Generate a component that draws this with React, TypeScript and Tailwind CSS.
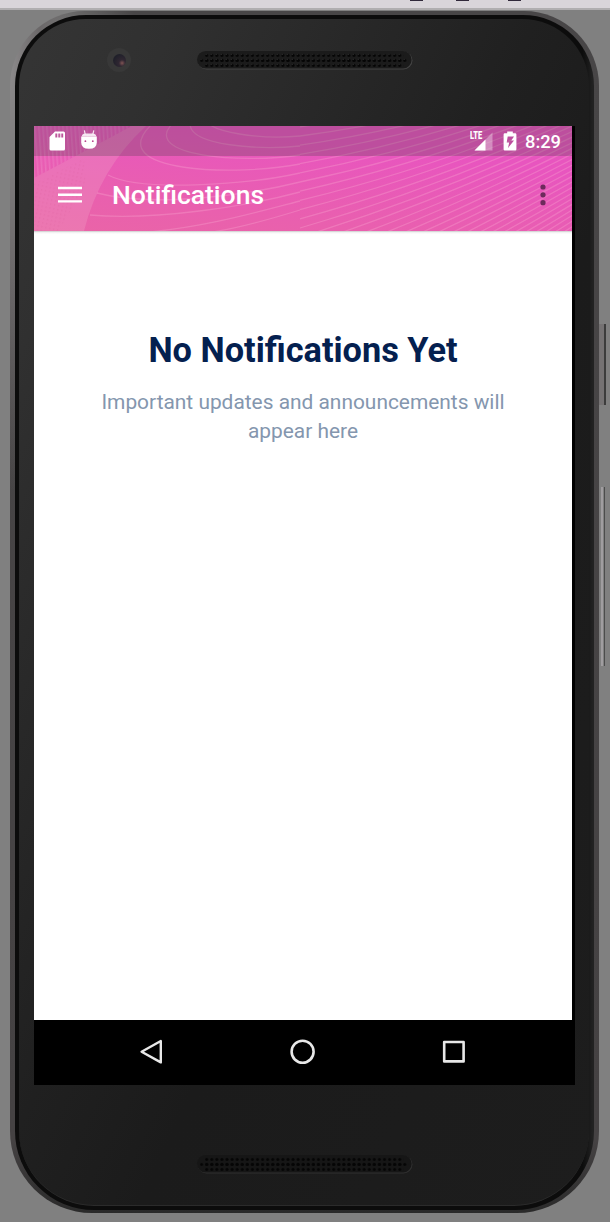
import React from "react";

const leftLoops = [
  "M172 -6 C176 6 226 14 266 10",
  "M156 -2 C156 20 226 24 266 20",
  "M138 -2 C108 30 206 38 266 29",
  "M118 -2 C66 48 206 50 266 38",
  "M74 49 C106 66 212 59 266 47",
  "M63 67 C120 82 214 69 266 56",
  "M56 89 C120 95 214 80 266 66",
  "M100 107 C160 104 220 87 266 75",
  "M170 107 C200 104 240 92 266 84",
];

const sweeps = Array.from({ length: 36 }, (_, i) => {
  const k = i - 3;
  const y0 = 10 + 9.2 * k;
  const s = 0.13 + 0.016 * Math.max(k, 0);
  const y1 = y0 - 66 - 3.6 * k;
  return `M266 ${y0.toFixed(1)} Q400 ${(y0 - s * 134).toFixed(1)} 538 ${y1.toFixed(1)}`;
});

function HeaderArt() {
  return (
    <svg className="absolute inset-0 h-full w-full" viewBox="0 0 538 105" preserveAspectRatio="none" aria-hidden="true">
      <defs>
        <linearGradient id="pink" x1="0" y1="120" x2="18" y2="-20" gradientUnits="userSpaceOnUse">
          <stop offset="0" stopColor="#ea66a4" />
          <stop offset="0.4" stopColor="#e960ae" />
          <stop offset="1" stopColor="#e855bf" />
        </linearGradient>
        <pattern id="bars" width="4" height="6" patternUnits="userSpaceOnUse" patternTransform="rotate(-4)">
          <rect width="1.5" height="6" fill="#fff" opacity="0.12" />
        </pattern>
        <pattern id="grain" width="4" height="4" patternUnits="userSpaceOnUse" patternTransform="rotate(12)">
          <rect width="1.4" height="1.8" fill="#d34f92" opacity="0.16" />
        </pattern>
      </defs>
      <rect width="538" height="105" fill="url(#pink)" />
      <path d="M0 0 H98 L0 52Z" fill="url(#bars)" />
      <path d="M98 0 H112 Q66 42 50 105 H0 V52Z" fill="#f0a8c8" opacity="0.28" />
      <path d="M0 58 L50 32 L52 60 L24 105 H0Z" fill="url(#grain)" />
      <g fill="none" stroke="#f8a8cf" strokeOpacity="0.34" strokeWidth="1.3">
        {leftLoops.map((d) => <path key={d} d={d} />)}
        {sweeps.map((d) => <path key={d} d={d} />)}
      </g>
    </svg>
  );
}

function Speaker({ id, dim }: { id: string; dim?: boolean }) {
  return (
    <svg className="block h-[20px] w-[218px]" viewBox="0 0 218 20" aria-hidden="true">
      <defs>
        <pattern id={id} x="3.1" y="2.9" width="5.08" height="5" patternUnits="userSpaceOnUse">
          <circle cx="2.5" cy="2.5" r="1.55" fill="#050505" />
          {!dim && <circle cx="1.9" cy="1.5" r="0.5" fill="#3a3a3a" />}
        </pattern>
      </defs>
      <rect x="1.5" y="1.5" width="215" height="18" rx="9" fill={dim ? "#303030" : "#444"} />
      <rect x="1" y="1" width="214.6" height="17.6" rx="8.8" fill={dim ? "#161616" : "#1b1b1b"} />
      <rect x="3.1" y="7.9" width="209" height="5" fill={`url(#${id})`} />
      <rect x="8.2" y="2.9" width="199" height="15" fill={`url(#${id})`} />
    </svg>
  );
}

function StatusBar() {
  return (
    <div className="relative flex h-[30px] items-center bg-[#3a3a3c]/25 pl-[15px] pr-[11px] text-white">
      <svg className="h-[20px] w-[16px]" viewBox="0 0 16 20" aria-hidden="true">
        <path fill="#fff" fillRule="evenodd" d="M6 .5H14.5Q16 .5 16 2V18Q16 19.5 14.5 19.5H2Q.5 19.5 .5 18V6ZM6.3 2.5V6.5H8.3V2.5ZM9.3 2.5V6.5H11.3V2.5ZM12.3 2.5V6.5H14.2V2.5Z" />
      </svg>
      <svg className="ml-[16px] h-[20px] w-[16px] overflow-visible" viewBox="0 0 16 20" aria-hidden="true">
        <path d="M3.4 -.6L4.2 3.5M12.8 -.6L11.8 3.5" stroke="#fff" strokeWidth="1.2" opacity="0.85" />
        <path d="M.7 5.6Q1 2.6 4.5 2.6H11.5Q15 2.6 15.3 5.6Z" fill="#fff" opacity="0.85" />
        <path fill="#fff" d="M.2 5.4H15.8V11.5Q15.8 17.8 8 17.8Q.2 17.8 .2 11.5Z" />
        <circle cx="4.4" cy="10.2" r="0.9" fill="#b8448d" />
        <circle cx="11.8" cy="10.2" r="0.9" fill="#b8448d" />
      </svg>
      <div className="ml-auto flex items-center">
        <div className="relative h-[20px] w-[24px]">
          <svg className="h-[20px] w-[24px]" viewBox="0 0 24 20" aria-hidden="true">
            <path d="M5.5 19.5L23.5 1.5V19.5Z" fill="#fff" opacity="0.35" />
            <path d="M5.5 19.5L16.5 8.5V19.5Z" fill="#fff" />
          </svg>
          <span className="absolute left-[1px] top-0 origin-left scale-x-[0.68] text-[11px] font-black leading-[10px]">LTE</span>
        </div>
        <svg className="ml-[10px] h-[20px] w-[14px]" viewBox="0 0 14 20" aria-hidden="true">
          <path fill="#fff" fillRule="evenodd" d="M4.2 .5H9.8V2.3H12.2Q13.4 2.3 13.4 3.5V18.3Q13.4 19.5 12.2 19.5H1.8Q.6 19.5 .6 18.3V3.5Q.6 2.3 1.8 2.3H4.2ZM4.7 5.5L3.7 11.5H6.2L5 17L11 9.5H8.3L11 5.5Z" />
        </svg>
        <span className="ml-[8px] pt-[2px] text-[18.3px] font-medium leading-[28px]">8:29</span>
      </div>
    </div>
  );
}

function AppBar() {
  return (
    <div className="relative flex h-[75px] items-center pl-[24px] pr-[26px] pt-[3px] text-white">
      <svg className="h-[18px] w-[24px]" viewBox="0 0 24 18" aria-label="Menu">
        <path d="M0 2H24M0 8.7H24M0 15.4H24" stroke="#fff" strokeWidth="2.4" />
      </svg>
      <h1 className="ml-[30px] text-[26.5px] font-medium leading-[36px]">Notifications</h1>
      <svg className="ml-auto h-[22px] w-[6px]" viewBox="0 0 6 22" aria-label="More">
        <g fill="#6d2a5c"><circle cx="3" cy="3" r="2.6" /><circle cx="3" cy="10.8" r="2.6" /><circle cx="3" cy="18.7" r="2.6" /></g>
      </svg>
    </div>
  );
}

function NavBar() {
  return (
    <div className="flex h-[65px] items-center justify-between bg-black pb-[2px] pl-[105px] pr-[109px]">
      <svg className="h-[26px] w-[24px]" viewBox="0 0 24 26" fill="none" stroke="#e8e8e8" strokeWidth="2.4" strokeLinejoin="round" aria-label="Back"><path d="M21.8 2V23.4L2.6 12.7Z" /></svg>
      <svg className="h-[26px] w-[26px]" viewBox="0 0 26 26" fill="none" stroke="#e8e8e8" strokeWidth="2.6" aria-label="Home"><circle cx="12.6" cy="12.7" r="11" /></svg>
      <svg className="h-[24px] w-[24px]" viewBox="0 0 24 24" fill="none" stroke="#e8e8e8" strokeWidth="2.6" strokeLinejoin="round" aria-label="Recents"><rect x="2.2" y="2" width="19.4" height="19.4" /></svg>
    </div>
  );
}

export default function App() {
  return (
    <div className="flex h-[1222px] w-[610px] flex-col overflow-hidden bg-[#808080] font-['Roboto',sans-serif]">
      <div className="flex h-[10px] shrink-0 border-b-2 border-[#b0aeb0] bg-[#d9d5da] pl-[410px]">
        <i className="h-px w-[13px] bg-[#30283a]" />
        <i className="ml-[33px] h-px w-[13px] bg-[#30283a]" />
        <i className="ml-[39px] h-px w-[13px] bg-[#30283a]" />
      </div>
      <div className="flex pl-[10px] pt-[1px]">
        <div className="h-[1202px] w-[589px] shrink-0 rounded-[75px_75px_82px_82px] bg-[radial-gradient(ellipse_60px_420px_at_0_60px,#8c8a8b_0,#6a6768_50%,transparent_100%),radial-gradient(circle_at_14px_50px,#a0a0a0_0,#777_45px,transparent_120px),linear-gradient(#484647_0%,#454243_94%,#2a2a2a_100%)] pb-[3px] pl-[5px] pr-[5px] pt-[4px]">
          <div className="h-full rounded-[71px_71px_79px_79px] bg-[linear-gradient(90deg,#0c0c0c_0,#0c0c0c_98%,#222_99.8%)] pb-[4px] pl-[4px] pr-[5px] pt-[4px]">
            <div className="flex h-full flex-col rounded-[67px_67px_75px_75px] border-b border-[#2b2b2b] bg-[linear-gradient(115deg,#353535_0%,#303030_14%,#2a2a2a_26%,#202020_46%,#1b1b1b_60%,#1d1d1d_100%)] pl-[15px]">
              <div className="flex h-[107px] shrink-0 pl-[73px] pt-[29px]">
                <div className="flex h-[24px] w-[24px] items-center justify-center rounded-full bg-[#383838]">
                  <div className="h-[13px] w-[13px] rounded-full bg-[radial-gradient(circle_at_70%_70%,#805454_0%,#302732_25%,#20202a_70%)]" />
                </div>
                <div className="ml-[65px] mt-[2px]"><Speaker id="topHoles" /></div>
              </div>
              <div className="flex w-[541px] shrink-0 flex-col bg-black">
                <main className="w-[538px] bg-white">
                  <header className="relative h-[105px]">
                    <HeaderArt />
                    <StatusBar />
                    <AppBar />
                  </header>
                  <div className="h-[3px] bg-[linear-gradient(#c9c9c9,#f2f2f2,#fff)]" />
                  <section className="h-[786px] px-[50px] pt-[95px] text-center">
                    <h2 className="text-[34.3px] font-bold leading-[42px] text-[#04204f]">No Notifications Yet</h2>
                    <p className="pt-[17px] text-[20.9px] leading-[29px] text-[#8496ae]">Important updates and announcements will<br />appear here</p>
                  </section>
                </main>
                <NavBar />
              </div>
              <div className="pl-[162px] pt-[69px]"><Speaker id="bottomHoles" dim /></div>
            </div>
          </div>
        </div>
        <div className="flex w-[8px] flex-col pt-[313px]">
          <div className="h-[81px] w-[7px] border-r-2 border-[#3c3c3c] bg-[#757273]" />
          <div className="ml-[2px] mt-[82px] h-[179px] w-[4px] border-l-2 border-r border-l-[#a09da0] border-r-[#4c4c4c]" />
        </div>
      </div>
    </div>
  );
}
